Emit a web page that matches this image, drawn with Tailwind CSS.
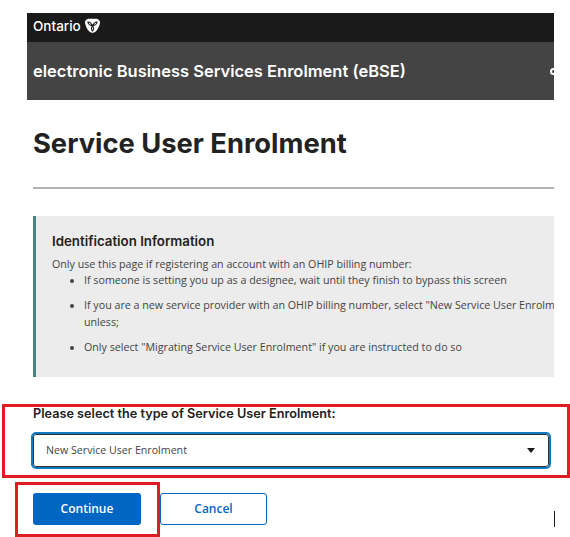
<!DOCTYPE html>
<html lang="en">
<head>
  <meta charset="UTF-8" />
  <title>Service User Enrolment</title>
  <script src="https://cdn.jsdelivr.net/npm/@tailwindcss/browser@4"></script>
</head>
<body class="bg-white text-[#1a1a1a] font-['Open_Sans',sans-serif] overflow-hidden">
<div class="relative w-[570px] h-[537px] overflow-hidden pt-[13px]">

  <header class="ml-[27px] w-[527px] overflow-hidden">
    <div class="h-[29px] bg-[#1a1a1a] flex items-center gap-[3px] pl-[6px] pb-[3px]">
      <span class="font-['Inter',sans-serif] font-medium text-[13.5px] text-white">Ontario</span>
      <svg class="w-[17px] h-[16px]" viewBox="0 0 24 24">
        <path fill="#fff" d="M7 1h10c4.500 0 7 3.500 6 7.500-1 4-3 8-5.500 11-3 3.500-8 3.500-11 0C4 16.500 2 12.500 1 8.500 0 4.500 2.500 1 7 1z"/>
        <path fill="none" stroke="#1a1a1a" stroke-width="1.700" stroke-linejoin="round" d="M12 11.500C9.500 7 7.500 5.500 5 6c.5 3 3 5 7 5.500zM12 11.500c2.500-4.500 4.500-6 7-5.500-.5 3-3 5-7 5.500zM12 11.500c-2 3-2.500 5.500 0 8 2.500-2.500 2-5 0-8z"/>
      </svg>
    </div>
    <div class="h-[58px] bg-[#444444] flex items-center justify-between pl-[6px] pt-[1px]">
      <span class="font-['Inter',sans-serif] font-semibold text-[16.5px] text-white whitespace-nowrap">electronic Business Services Enrolment (eBSE)</span>
      <span class="w-[7px] h-[7px] rounded-full border-2 border-white -mr-[3px]"></span>
    </div>
  </header>

  <main class="ml-[33px] w-[521px]">
    <h1 class="mt-[26px] font-['Inter',sans-serif] font-bold text-[27.3px] leading-[36px] text-[#222] whitespace-nowrap">Service User Enrolment</h1>
    <div class="mt-[25px] h-[2px] bg-[#b3b3b3]"></div>

    <section class="mt-[27px] h-[161px] bg-[#ececec] border-l-[3px] border-[#47837e] pl-[16px] pt-[17px] overflow-hidden">
      <h2 class="font-['Inter',sans-serif] font-semibold text-[13.3px] leading-[17px] text-[#222]">Identification Information</h2>
      <p class="mt-[7px] text-[10.7px] leading-[15px] text-[#444] whitespace-nowrap">Only use this page if registering an account with an OHIP billing number:</p>
      <ul class="list-disc pl-[32px] text-[10.7px] leading-[17px] text-[#444] w-[600px]">
        <li>If someone is setting you up as a designee, wait until they finish to bypass this screen</li>
        <li class="mt-[8px]">If you are a new service provider with an OHIP billing number, select "New Service User Enrolment"<br>unless;</li>
        <li class="mt-[8px]">Only select "Migrating Service User Enrolment" if you are instructed to do so</li>
      </ul>
    </section>

    <label class="block mt-[29px] font-['Inter',sans-serif] font-semibold text-[12.7px] leading-[16px] text-[#222]">Please select the type of Service User Enrolment:</label>
    <div class="mt-[12px] w-[516px] h-[33px] flex items-center justify-between bg-white border border-[#333] rounded-[3px] outline-[2px] outline-[#0f7ac2] pl-[12px] pr-[13px]">
      <span class="text-[10.650px] text-[#444]">New Service User Enrolment</span>
      <svg class="w-[8px] h-[5px]" viewBox="0 0 10 6"><path fill="#1a1a1a" d="M0 0h10L5 6z"/></svg>
    </div>

    <div class="mt-[26px] flex gap-[19px]">
      <button class="w-[108px] h-[32px] bg-[#0066c4] rounded-[3px] text-white text-[12px] font-semibold">Continue</button>
      <button class="w-[107px] h-[32px] bg-white border border-[#0066c4] rounded-[3px] text-[#0066c4] text-[12px] font-semibold">Cancel</button>
    </div>
  </main>

  <div class="absolute left-[2px] top-[404px] w-[568px] h-[74px] border-[3px] border-[#e01b22]"></div>
  <div class="absolute left-[15px] top-[482px] w-[145px] h-[55px] border-[3px] border-[#e01b22]"></div>
  <div class="absolute left-[554px] top-[511px] w-[1px] h-[16px] bg-[#1a1a1a]"></div>
</div>
</body>
</html>
